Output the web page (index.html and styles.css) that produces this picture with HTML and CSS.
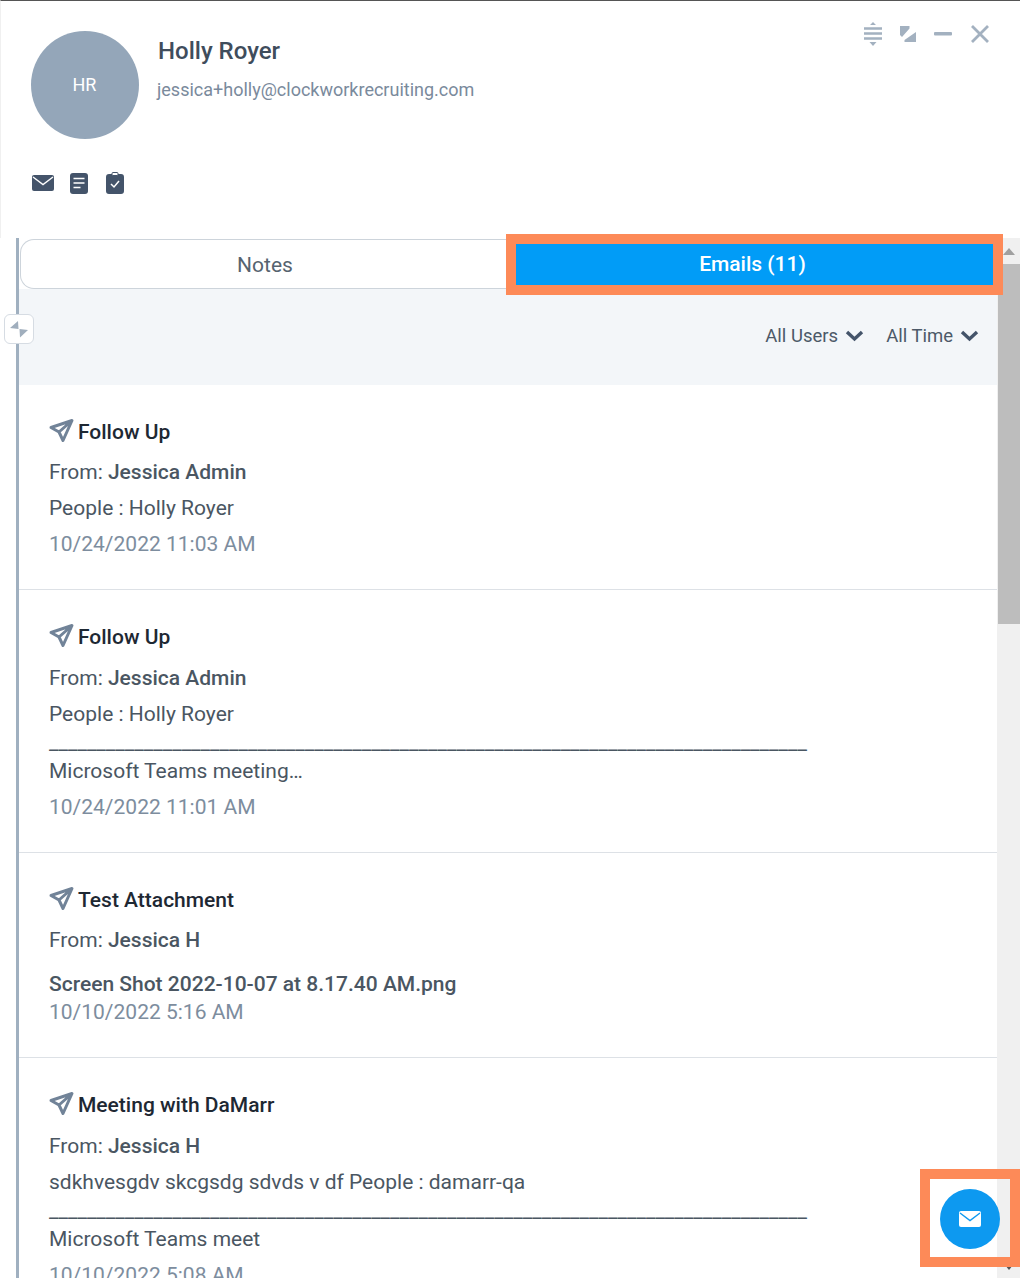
FILE: index.html
```html
<!DOCTYPE html>
<html lang="en">
<head>
<meta charset="utf-8">
<title>Holly Royer</title>
<link rel="stylesheet" href="styles.css">
</head>
<body>
<div class="app">
  <header class="head">
    <div class="who">
      <div class="avatar">HR</div>
      <div class="names">
        <div class="name">Holly Royer</div>
        <div class="mail">jessica+holly@clockworkrecruiting.com</div>
      </div>
    </div>
    <div class="actions">
      <svg class="act-mail" width="22" height="16" viewBox="0 0 22 16"><rect width="22" height="16" rx="2" fill="#44546a"/><path d="M1 2l10 7.500L21 2" fill="none" stroke="#fff" stroke-width="1.400"/></svg>
      <svg class="act-doc" width="18" height="21" viewBox="0 0 18 21"><rect width="18" height="21" rx="3" fill="#44546a"/><path d="M3.500 5.500h11M3.500 10h11M3.500 14.500h7" stroke="#fff" stroke-width="1.500"/></svg>
      <svg width="18" height="22" viewBox="0 0 18 22"><path d="M3 2h3V1h6v1h3a3 3 0 0 1 3 3v14a3 3 0 0 1-3 3H3a3 3 0 0 1-3-3V5a3 3 0 0 1 3-3z" fill="#44546a"/><rect x="6" y="0.500" width="6" height="3" rx="1" fill="#fff" stroke="#44546a"/><path d="M5 12l3 3 5-6" fill="none" stroke="#fff" stroke-width="1.500"/></svg>
    </div>
    <div class="win">
      <svg width="18" height="24" viewBox="0 0 18 24"><path d="M9 0l3 3H6zM9 24l-3.500-4h7z" fill="#a3b1c0"/><path d="M0 6.500h18M0 11.500h18M0 16.500h18" stroke="#a3b1c0" stroke-width="2.500"/></svg>
      <svg width="16" height="16" viewBox="0 0 16 16"><path d="M0 0h9.500v2.500L2 11 0 9zM16 6v10H4.500v-2z" fill="#a3b1c0"/></svg>
      <svg width="18" height="4" viewBox="0 0 18 4"><rect width="18" height="3.500" rx="1" fill="#a3b1c0"/></svg>
      <svg width="20" height="20" viewBox="0 0 20 20"><path d="M2 2l16 16M18 2L2 18" stroke="#a3b1c0" stroke-width="2.800"/></svg>
    </div>
  </header>

  <div class="body">
    <div class="rail"></div>
    <button class="toggle" aria-label="Toggle">
      <svg width="18" height="17" viewBox="0 0 18 17"><path d="M0 7L8 0l.5 8zM9.500 8l8.500 1-8 7.500z" fill="#a0aebd"/></svg>
    </button>
    <main class="main">
      <nav class="tabs">
        <div class="tab">Notes</div>
        <div class="tab on">Emails (11)</div>
      </nav>
      <div class="filters">
        <span class="filter">All Users <svg width="19" height="12" viewBox="0 0 19 12"><path d="M2 2l7.500 7L17 2" fill="none" stroke="#44546a" stroke-width="3.400"/></svg></span>
        <span class="filter">All Time <svg width="19" height="12" viewBox="0 0 19 12"><path d="M2 2l7.500 7L17 2" fill="none" stroke="#44546a" stroke-width="3.400"/></svg></span>
      </div>

      <article class="item">
        <h3 class="title"><svg class="send" width="25" height="25" viewBox="0 0 25 25"><path d="M23 2.500L2 9.500l8 4.500 4 8.500z M23 2.500L10 14" fill="none" stroke="#718398" stroke-width="3" stroke-linejoin="round"/></svg>Follow Up</h3>
        <p class="row">From: <b>Jessica Admin</b></p>
        <p class="row">People : Holly Royer</p>
        <p class="row date">10/24/2022 11:03 AM</p>
      </article>

      <article class="item two">
        <h3 class="title"><svg class="send" width="25" height="25" viewBox="0 0 25 25"><path d="M23 2.500L2 9.500l8 4.500 4 8.500z M23 2.500L10 14" fill="none" stroke="#718398" stroke-width="3" stroke-linejoin="round"/></svg>Follow Up</h3>
        <p class="row">From: <b>Jessica Admin</b></p>
        <p class="row">People : Holly Royer</p>
        <div class="rule">________________________________________________________________________________</div>
        <p class="row">Microsoft Teams meeting…</p>
        <p class="row date">10/24/2022 11:01 AM</p>
      </article>

      <article class="item three">
        <h3 class="title"><svg class="send" width="25" height="25" viewBox="0 0 25 25"><path d="M23 2.500L2 9.500l8 4.500 4 8.500z M23 2.500L10 14" fill="none" stroke="#718398" stroke-width="3" stroke-linejoin="round"/></svg>Test Attachment</h3>
        <p class="row">From: <b>Jessica H</b></p>
        <p class="row file"><b>Screen Shot 2022-10-07 at 8.17.40 AM.png</b></p>
        <p class="row date tight">10/10/2022 5:16 AM</p>
      </article>

      <article class="item four">
        <h3 class="title"><svg class="send" width="25" height="25" viewBox="0 0 25 25"><path d="M23 2.500L2 9.500l8 4.500 4 8.500z M23 2.500L10 14" fill="none" stroke="#718398" stroke-width="3" stroke-linejoin="round"/></svg>Meeting with DaMarr</h3>
        <p class="row">From: <b>Jessica H</b></p>
        <p class="row">sdkhvesgdv skcgsdg sdvds v df People : damarr-qa</p>
        <div class="rule">________________________________________________________________________________</div>
        <p class="row">Microsoft Teams meet</p>
        <p class="row date">10/10/2022 5:08 AM</p>
      </article>
    </main>
    <div class="scroll">
      <div class="arrow up"></div>
      <div class="thumb"></div>
      <div class="arrow down"></div>
    </div>
  </div>

  <div class="mark mark-tab"></div>
  <div class="mark mark-fab"></div>
  <button class="fab" aria-label="Compose email">
    <svg width="22" height="16" viewBox="0 0 22 16"><rect width="22" height="16" rx="2" fill="#fff"/><path d="M1 2l10 7.500L21 2" fill="none" stroke="#0d99f0" stroke-width="1.400"/></svg>
  </button>
</div>
</body>
</html>
```
FILE: styles.css
```css
* { box-sizing: border-box; }
html, body { margin: 0; padding: 0; background: #fff; }
body { font-family: Roboto, "Liberation Sans", sans-serif; color: #44505c; overflow: hidden; }
.app { position: relative; width: 1020px; height: 1278px; overflow: hidden; }

.head { position: relative; height: 238px; border-top: 1px solid #555; border-left: 1px solid #f0f0f0; padding: 30px 0 0 30px; }
.who { display: flex; }
.avatar { width: 108px; height: 108px; border-radius: 50%; background: #94a6b9; color: #fff; font-size: 18px; display: flex; align-items: center; justify-content: center; padding: 0 1px 2px 0; }
.names { margin-left: 17px; }
.name { margin: 6px 0 0 2px; font-size: 24px; line-height: 28px; font-weight: 500; color: #3f4d5c; }
.mail { margin: 12px 0 0 1px; font-size: 18px; line-height: 26px; color: #7a8a9c; }
.actions { display: flex; align-items: center; gap: 18px; margin: 33px 0 0 1px; }
.act-mail { margin-right: -2px; }
.act-doc { margin-left: 0; }
.win { position: absolute; top: 21px; right: 30px; display: flex; align-items: center; gap: 18px; }

.body { display: flex; height: 1040px; }
.rail { width: 19px; flex: none; border-right: 3px solid #a0b0c0; }
.toggle { position: absolute; left: 4px; top: 314px; width: 30px; height: 30px; padding: 0; border: 1px solid #d6dce3; border-radius: 6px; background: #fff; display: flex; align-items: center; justify-content: center; z-index: 2; }
.main { width: 978px; flex: none; overflow: hidden; }
.scroll { width: 23px; flex: none; background: #f0f0f0; position: relative; }
.thumb { position: absolute; top: 26px; left: 1px; right: 0; height: 360px; background: #bdbdbd; }
.arrow { position: absolute; left: 6px; border-left: 6px solid transparent; border-right: 6px solid transparent; }
.arrow.up { top: 10px; border-bottom: 7px solid #a0a0a0; }
.arrow.down { bottom: 8px; border-top: 5px solid #555; left: 8px; border-left-width: 4px; border-right-width: 4px; }

.tabs { display: flex; height: 51px; padding: 1px 0 0 1px; }
.tab { flex: 1; height: 50px; display: flex; align-items: center; justify-content: center; font-size: 21px; color: #56636f; }
.tab:first-child { width: 496px; flex: none; padding: 1px 7px 0 0; border: 1px solid #cdd4db; border-right: 0; border-radius: 14px 0 0 14px; }
.tab.on { background: #019cf7; color: #fff; font-weight: 500; margin: 4px 4px 4px 0; height: 42px; flex: none; width: 478px; padding-right: 5px; }

.filters { height: 96px; background: #f3f6f9; display: flex; justify-content: flex-end; align-items: center; gap: 22px; padding: 0 18px 2px 0; }
.filter { font-size: 18.500px; color: #4c5968; display: flex; align-items: center; gap: 7px; }

.item { height: 205px; padding: 27px 0 0 30px; border-bottom: 1px solid #dde1e6; }
.item.two { height: 263px; }
.item.four { border-bottom: 0; height: 260px; }
.title { display: flex; align-items: center; margin: 0 0 2px; height: 40px; font-size: 21px; font-weight: 500; color: #1e2833; }
.item.two .title, .item.four .title { margin-bottom: 3px; }
.send { margin: -4px 4px 0 0; }
.row { margin: 0; height: 36px; font-size: 21px; line-height: 36px; color: #4a5662; white-space: nowrap; }
.row b { font-weight: 500; }
.date { color: #7d8d9e; }
.file { margin-top: 8px; height: 36px; }
.tight { margin-top: -8px; }
.rule { height: 21px; font-size: 21px; line-height: 21px; color: #4a5662; white-space: nowrap; }

.mark { position: absolute; border: 10px solid #fd8a58; z-index: 3; pointer-events: none; }
.mark-tab { left: 506px; top: 234px; width: 497px; height: 61px; }
.mark-fab { left: 920px; top: 1169px; width: 100px; height: 98px; }
.fab { position: absolute; left: 940px; top: 1189px; width: 60px; height: 60px; padding: 0; border: 0; border-radius: 50%; background: #0d99f0; display: flex; align-items: center; justify-content: center; z-index: 4; }
```
